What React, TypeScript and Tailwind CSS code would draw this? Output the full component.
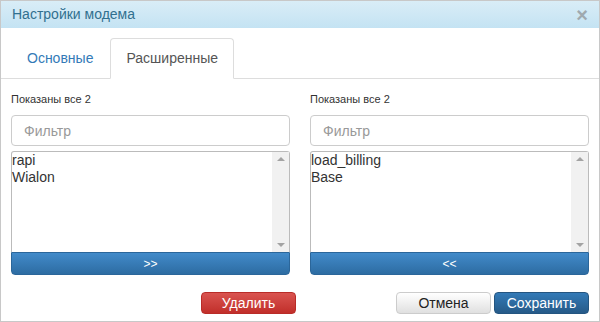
import React from "react";

function Column({ items, arrow }: { items: string[]; arrow: string }) {
  return (
    <div className="flex flex-col w-[279px]">
      <div className="text-[11px] leading-[13px] text-[#333] h-[13px] mb-[9px]">Показаны все 2</div>
      <input
        placeholder="Фильтр"
        className="h-[31px] w-full rounded-[4px] border border-[#ccc] px-[12px] text-[14px] text-[#555] placeholder:text-[#999] outline-none"
      />
      <div className="mt-[5px] h-[101px] flex border border-[#bbb] border-b-0 rounded-t-[3px] bg-white">
        <div className="flex-1 text-[14px] leading-[17px] text-[#333]">
          {items.map((i) => (
            <div key={i}>{i}</div>
          ))}
        </div>
        <div className="w-[17px] bg-[#f1f1f1] flex flex-col justify-between items-center py-[5px]">
          <div className="w-0 h-0 border-l-[4px] border-r-[4px] border-b-[4px] border-l-transparent border-r-transparent border-b-[#a3a3a3]" />
          <div className="w-0 h-0 border-l-[4px] border-r-[4px] border-t-[4px] border-l-transparent border-r-transparent border-t-[#a3a3a3]" />
        </div>
      </div>
      <button className="h-[23px] w-full rounded-b-[4px] bg-gradient-to-b from-[#428bca] to-[#2d6ca2] border border-[#2b669a] text-white text-[12px] leading-[20px]">
        {arrow}
      </button>
    </div>
  );
}

export default function App() {
  return (
    <div className="w-[600px] h-[322px] border border-[#c8c8c8] bg-white flex flex-col font-['Liberation_Sans',Arial,sans-serif]">
      <div className="h-[27px] shrink-0 bg-gradient-to-b from-[#d9edf7] to-[#c4e3f3] flex items-center justify-between pl-[11px] pr-[11px]">
        <span className="text-[14px] text-[#31708f]">Настройки модема</span>
        <span className="text-[20px] font-bold text-[#9fa9af] leading-none">×</span>
      </div>

      <div className="pt-[10px] flex border-b border-[#ddd] pl-[11px]">
        <div className="px-[15px] h-[40px] flex items-center text-[14px] text-[#337ab7] mr-[2px]">Основные</div>
        <div className="px-[15px] h-[41px] -mb-[1px] flex items-center text-[14px] text-[#555] bg-white border border-[#ddd] border-b-white rounded-t-[4px]">
          Расширенные
        </div>
      </div>

      <div className="px-[10px] pt-[14px] flex gap-[20px]">
        <Column items={["rapi", "Wialon"]} arrow=">>" />
        <Column items={["load_billing", "Base"]} arrow="<<" />
      </div>

      <div className="px-[10px] mt-[17px] flex justify-end">
        <button className="h-[22px] w-[95px] mr-[100px] rounded-[4px] border border-[#b92c28] bg-gradient-to-b from-[#d9534f] to-[#c12e2a] text-white text-[14px] leading-[20px]">
          Удалить
        </button>
        <button className="h-[22px] w-[95px] mr-[3px] rounded-[4px] border border-[#ccc] bg-gradient-to-b from-white to-[#e0e0e0] text-[#222] text-[14px] leading-[20px]">
          Отмена
        </button>
        <button className="h-[22px] w-[95px] rounded-[4px] border border-[#245580] bg-gradient-to-b from-[#337ab7] to-[#265a88] text-white text-[14px] leading-[20px]">
          Сохранить
        </button>
      </div>
    </div>
  );
}
